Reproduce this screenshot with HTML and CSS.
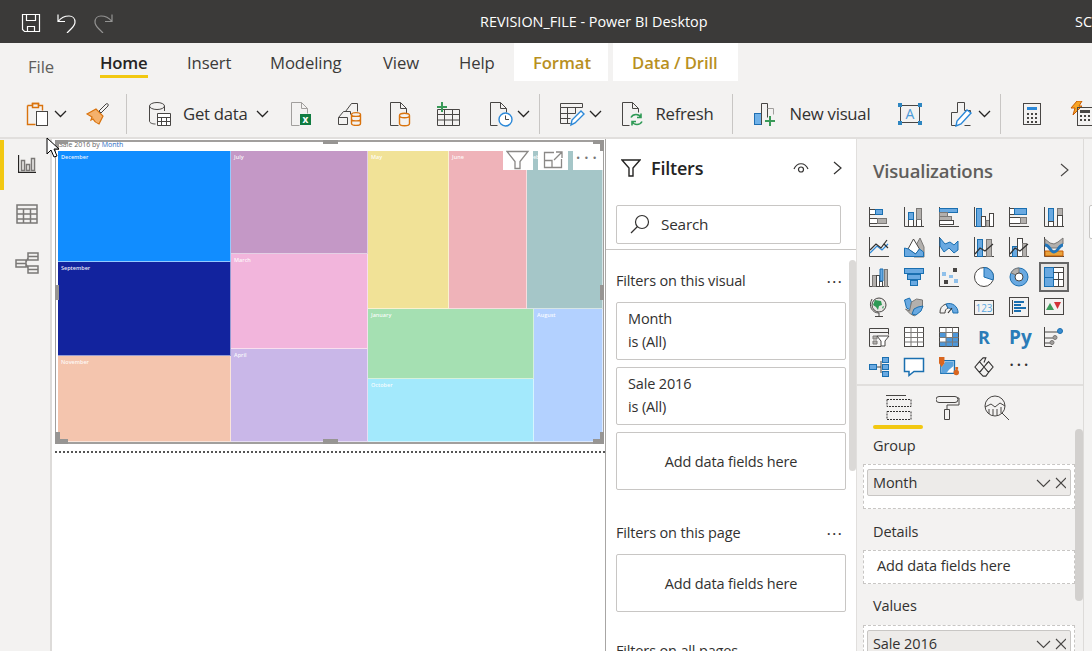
FILE: index.html
```html
<!DOCTYPE html>
<html lang="en">
<head>
    <meta charset="UTF-8">
    <title>REVISION_FILE - Power BI Desktop</title>
    <link rel="stylesheet" href="styles.css">
</head>
<body>
<div class="app">
    <header class="titlebar">
        <div class="quick">
            <svg width="20" height="20" viewBox="0 0 20 20"><path class="wl" d="M1.500 1.500h17v17h-15l-2-2zM5.500 1.500v6h9v-6M6.500 18.500v-5h7v5"/></svg>
            <svg width="20" height="20" viewBox="0 0 20 20"><path class="wl" d="M1 1.500v7h7M1.500 8C5 3.500 9 3 12 3c4 0 6 3 6 6 0 3-2 5-4 7l-4 4"/></svg>
            <svg class="off" width="20" height="20" viewBox="0 0 20 20"><path class="wl" d="M19 1.500v7h-7M18.500 8C15 3.500 11 3 8 3c-4 0-6 3-6 6 0 3 2 5 4 7l4 4"/></svg>
        </div>
        <div class="doc-title">REVISION_FILE - Power BI Desktop</div>
        <div class="user">SC</div>
    </header>

    <nav class="tabs">
        <a class="tab file">File</a>
        <a class="tab home">Home</a>
        <a class="tab insert">Insert</a>
        <a class="tab modeling">Modeling</a>
        <a class="tab view">View</a>
        <a class="tab help">Help</a>
        <a class="ctx format">Format</a>
        <a class="ctx drill">Data / Drill</a>
    </nav>

    <div class="ribbon">
        <svg class="m26" width="24" height="26" viewBox="0 0 24 26"><path class="or" d="M1.500 4.500h5v-2h6v2h4v5"/><path class="or" d="M1.500 4.500v19h8"/><path class="or" d="M6.500 2.500h6v4h-6z"/><rect class="dk" x="10.500" y="10.500" width="11" height="14"/></svg>
        <svg class="chev m4" width="13" height="8" viewBox="0 0 13 8"><path d="M1 1l5.500 5.500L12 1"/></svg>
        <svg class="m19" width="24" height="24" viewBox="0 0 24 24"><path class="or2" d="M1 12l9-5 7 7-4 8c-3-1-5-3-6-5l-2 1 1-3z"/><path class="dk0" d="M13 9l7-7c1-1 3 0 2 2l-7 7z"/></svg>
        <span class="sep m16"></span>
        <svg class="m21" width="24" height="26" viewBox="0 0 24 26"><path class="dk0" d="M1.500 5v15c0 2 3 3 6 3M16.500 5v5"/><ellipse class="dk0" cx="9" cy="5" rx="7.500" ry="3.500"/><path class="dk" d="M9.500 12.500h13v12h-13zM9.500 16.500h13M13.500 16.500v8M18.500 16.500v8M9.500 20.500h13"/></svg>
        <span class="rb-text m11">Get data</span>
        <svg class="chev m8" width="13" height="8" viewBox="0 0 13 8"><path d="M1 1l5.500 5.500L12 1"/></svg>
        <svg class="m21" width="22" height="26" viewBox="0 0 22 26"><path class="lt" d="M1.500 24.500v-23h10l6 6v5M11.500 1.500v6h6M1.500 24.500h8"/><rect class="xl" x="10" y="13" width="11" height="11"/><text class="xl-x" x="12.500" y="22">x</text></svg>
        <svg class="m25" width="25" height="26" viewBox="0 0 25 26"><path class="dk0" d="M8.500 10.500l6-8h6v8M1.500 16.500l5-6h7v3M1.500 16.500v7h9M1.500 16.500h9v7"/><path class="or" d="M14.500 13.500c0-2.500 9-2.500 9 0v9c0 2.500-9 2.500-9 0zM14.500 13.500c0 2.500 9 2.500 9 0M14.500 18c0 2.500 9 2.500 9 0"/></svg>
        <svg class="m27" width="24" height="26" viewBox="0 0 24 26"><path class="dk0" d="M1.500 24.500v-23h10l6 6v5M11.500 1.500v6h6M1.500 24.500h8"/><path class="or" d="M10.500 14.500c0-3 10-3 10 0v8c0 3-10 3-10 0zM10.500 14.500c0 3 10 3 10 0"/></svg>
        <svg class="m23" width="24" height="24" viewBox="0 0 24 24"><path class="dk0" d="M1.500 7.500h22v16h-22zM1.500 12.500h22M1.500 18h22M8.500 7.500v16M16.500 7.500v16"/><path class="gn" d="M6 0v10M1 5h10"/></svg>
        <svg class="m29" width="24" height="26" viewBox="0 0 24 26"><path class="dk0" d="M1.500 24.500v-23h10l6 6v4M11.500 1.500v6h6M1.500 24.500h7"/><circle class="bc" cx="16.500" cy="18.500" r="6.500"/><path class="bc0" d="M16.500 14.500v4h3.500"/></svg>
        <svg class="chev m4" width="13" height="8" viewBox="0 0 13 8"><path d="M1 1l5.500 5.500L12 1"/></svg>
        <span class="sep m9"></span>
        <svg class="m19" width="26" height="26" viewBox="0 0 26 26"><path class="dk0" d="M1.500 2.500h22v4h-22zM1.500 6.500v16h10M8.500 6.500v16M16.500 6.500v6M1.500 12.500h15M1.500 17.500h10"/><path class="bc" d="M12 24l1-5 9-9 3 3-9 9z"/></svg>
        <svg class="chev m4" width="13" height="8" viewBox="0 0 13 8"><path d="M1 1l5.500 5.500L12 1"/></svg>
        <svg class="m19" width="24" height="26" viewBox="0 0 24 26"><path class="dk0" d="M1.500 24.500v-23h10l6 6v4M11.500 1.500v6h6M1.500 24.500h7"/><path class="gn2" d="M10 16.500c2-4 8-4 10 0M20 12.500v4h-4M21 20.500c-2 4-8 4-10 0M11 24.500v-4h4"/></svg>
        <span class="rb-text m11">Refresh</span>
        <span class="sep m19"></span>
        <svg class="m20" width="24" height="24" viewBox="0 0 24 24"><rect class="bx" x="1.500" y="11.500" width="7" height="11"/><path class="dk0" d="M8.500 22.500v-21h6v14"/><path class="lt" d="M14.500 6.500h6v6"/><path class="gn" d="M17 14v10M12 19h10"/></svg>
        <span class="rb-text m12">New visual</span>
        <svg class="m28" width="24" height="24" viewBox="0 0 24 24"><rect class="dk0" x="2.500" y="3.500" width="19" height="17"/><text class="tb-a" x="12" y="17" text-anchor="middle">A</text><path class="hd" d="M0 1h4v4H0zM20 1h4v4h-4zM0 19h4v4H0zM20 19h4v4h-4z"/></svg>
        <svg class="m28" width="24" height="26" viewBox="0 0 24 26"><path class="dk0" d="M1.500 24.500v-13h6v-10h7v8h6v3M1.500 24.500h6M14.500 24.500h6"/><path class="bc" d="M6 25l1-5 10-11 4 3-10 11z"/></svg>
        <svg class="chev m4" width="13" height="8" viewBox="0 0 13 8"><path d="M1 1l5.500 5.500L12 1"/></svg>
        <span class="sep m9"></span>
        <svg class="m21" width="20" height="24" viewBox="0 0 20 24"><rect class="dk0" x="1.500" y="1.500" width="17" height="21"/><path class="bc1" d="M5 5h10v3H5z"/><path class="dots" d="M5 11h2v2H5zM9 11h2v2H9zM13 11h2v2h-2zM5 15h2v2H5zM9 15h2v2H9zM13 15h2v2h-2zM5 19h2v2H5zM9 19h2v2H9zM13 19h2v2h-2z"/></svg>
        <svg class="m27" width="24" height="26" viewBox="0 0 24 26"><path class="bolt" d="M8 0h5l-3 5h3l-9 9 2-7H2z"/><rect class="dk0" x="8.500" y="6.500" width="15" height="18"/><path class="dots" d="M11 9h10v3H11zM11 14h2v2h-2zM15 14h2v2h-2zM19 14h2v2h-2zM11 18h2v2h-2zM15 18h2v2h-2zM19 18h2v2h-2z"/></svg>
    </div>

    <div class="workspace">
        <aside class="rail">
            <div class="rail-item active">
                <svg width="18" height="18" viewBox="0 0 18 18"><path class="rl" d="M.5 0v17.500H18"/><path class="rl2" d="M3.500 5.500h3v10h-3zM8.500 9.500h3v6h-3zM13.500 3.500h3v12h-3z"/></svg>
            </div>
            <div class="rail-item">
                <svg width="22" height="20" viewBox="0 0 22 20"><path class="rl2" d="M1 1h20v18H1zM1 5h20M1 10h20M1 15h20M7.500 5v14M14.500 5v14"/></svg>
            </div>
            <div class="rail-item">
                <svg width="24" height="22" viewBox="0 0 24 22"><path class="rl2" d="M13 1h10v7H13zM13 4.500h10M1 8h10v7H1zM1 11.500h10M13 14h10v7H13zM13 17.500h10M11 10l2-4M11 12l2 4"/></svg>
            </div>
        </aside>

        <main class="canvas">
            <div class="visual">
                <div class="visual-title">Sale 2016 by <b>Month</b></div>
                <div class="treemap">
                    <div class="col col-a">
                        <div class="leaf december">December</div>
                        <div class="leaf september">September</div>
                        <div class="leaf november">November</div>
                    </div>
                    <div class="col col-b">
                        <div class="leaf july">July</div>
                        <div class="leaf march">March</div>
                        <div class="leaf april">April</div>
                    </div>
                    <div class="col col-c">
                        <div class="row row-top">
                            <div class="leaf may">May</div>
                            <div class="leaf june">June</div>
                            <div class="leaf feb">February</div>
                        </div>
                        <div class="row row-bottom">
                            <div class="col col-d">
                                <div class="leaf january">January</div>
                                <div class="leaf october">October</div>
                            </div>
                            <div class="leaf august">August</div>
                        </div>
                    </div>
                </div>
                <div class="hover-bar">
                    <span class="hover-btn"><svg width="24" height="20" viewBox="0 0 24 20"><path class="hv" d="M1 1.500h21l-8 10v7h-5v-7z"/></svg></span>
                    <span class="hover-btn"><svg width="20" height="18" viewBox="0 0 20 18"><path class="hv" d="M11 1.500H1.500v15h17V8M1.500 9.500H9v7M13 1h6v6M19 1l-8 8"/></svg></span>
                    <span class="hover-btn more">&middot;&middot;&middot;</span>
                </div>
                <i class="h tl"></i><i class="h tl2"></i><i class="h tm"></i><i class="h tr"></i><i class="h tr2"></i>
                <i class="h ml"></i><i class="h mr"></i>
                <i class="h hbl"></i><i class="h hbl2"></i><i class="h hbm"></i><i class="h hbr"></i><i class="h hbr2"></i>
            </div>
            <div class="dotted"></div>
        </main>

        <section class="filters">
            <div class="filters-head">
                <svg width="20" height="18" viewBox="0 0 20 18"><path class="fl" d="M1 1h18l-7 8v8H8V9z"/></svg>
                <h2>Filters</h2>
                <svg class="eye" width="16" height="12" viewBox="0 0 16 12"><path class="fl0" d="M1 7c3-7 11-7 14 0"/><circle class="fl0" cx="8" cy="7.500" r="2.500"/></svg>
                <svg class="next" width="9" height="14" viewBox="0 0 9 14"><path class="fl0" d="M1 1l7 6-7 6"/></svg>
            </div>
            <div class="search">
                <svg width="20" height="20" viewBox="0 0 20 20"><circle class="fl0" cx="12" cy="8" r="6.500"/><path class="fl0" d="M7.500 12.500L1 19"/></svg>
                <span>Search</span>
            </div>
            <div class="filter-scroll">
                <div class="filter-heading"><span>Filters on this visual</span><span class="ell">&middot;&middot;&middot;</span></div>
                <div class="card"><div>Month</div><div>is (All)</div></div>
                <div class="card"><div>Sale 2016</div><div>is (All)</div></div>
                <div class="card empty">Add data fields here</div>
                <div class="filter-heading page"><span>Filters on this page</span><span class="ell">&middot;&middot;&middot;</span></div>
                <div class="card empty">Add data fields here</div>
                <div class="filter-heading all"><span>Filters on all pages</span></div>
                <div class="thumb"></div>
            </div>
        </section>

        <section class="viz">
            <div class="viz-head">
                <h2>Visualizations</h2>
                <svg width="9" height="14" viewBox="0 0 9 14"><path class="gy" d="M1 1l7 6-7 6"/></svg>
            </div>
            <div class="viz-grid">
                <svg viewBox="0 0 20 20"><path class="ax" d="M.5 0v19.500H20"/><rect class="wh" x=".5" y="2.500" width="6" height="5"/><rect class="blu" x="6.500" y="2.500" width="7" height="5"/><rect class="wh" x=".5" y="11.500" width="8" height="5"/><rect class="gr" x="8.500" y="11.500" width="9" height="5"/></svg>
                <svg viewBox="0 0 20 20"><path class="ax" d="M.5 0v19.500H20"/><rect class="wh" x="4.500" y="12.500" width="5" height="7"/><rect class="blu" x="4.500" y="5.500" width="5" height="7"/><rect class="wh" x="12.500" y="12.500" width="5" height="7"/><rect class="gr" x="12.500" y="1.500" width="5" height="11"/></svg>
                <svg viewBox="0 0 20 20"><path class="ax" d="M.5 0v19.500H20"/><rect class="blu" x=".5" y="1.500" width="18" height="4"/><rect class="gr" x=".5" y="5.500" width="8" height="4"/><rect class="gr" x=".5" y="9.500" width="12" height="4"/><rect class="wh" x=".5" y="13.500" width="14" height="4"/></svg>
                <svg viewBox="0 0 20 20"><path class="ax" d="M.5 0v19.500H20"/><rect class="blu" x="2.500" y="1.500" width="5" height="18"/><rect class="wh" x="7.500" y="9.500" width="4" height="10"/><rect class="gr" x="12" y="13.500" width="3.500" height="6"/><rect class="wh" x="15.500" y="6.500" width="4" height="13"/></svg>
                <svg viewBox="0 0 20 20"><path class="ax" d="M.5 0v19.500H20"/><rect class="wh" x=".5" y="1.500" width="5" height="6"/><rect class="blu" x="5.500" y="1.500" width="12" height="6"/><rect class="wh" x=".5" y="10.500" width="11" height="6"/><rect class="gr" x="11.500" y="10.500" width="6" height="6"/></svg>
                <svg viewBox="0 0 20 20"><path class="ax" d="M.5 0v19.500H20"/><rect class="blu" x="4.500" y="1.500" width="5" height="13"/><rect class="wh" x="4.500" y="14.500" width="5" height="5"/><rect class="gr" x="13.500" y="1.500" width="5" height="7"/><rect class="wh" x="13.500" y="8.500" width="5" height="11"/></svg>

                <svg viewBox="0 0 20 20"><path class="ax" d="M.5 0v19.500H20"/><path class="ln-b" d="M1 16l7-7 5 4 6-6"/><path class="ln-d" d="M1 13l6-6 5 4 3-4 4 4M15 7l3-4"/></svg>
                <svg viewBox="0 0 20 20"><path class="gr" d="M10 20V12l6-11 4 9v10z"/><path class="wh" d="M4 12L9.500 2l6 10-4 5z"/><path class="blu" d="M.5 19.500V11l4 1 7 5 4-5 4 3v4.500z"/></svg>
                <svg viewBox="0 0 20 20"><path class="ax" d="M.5 0v19.500H20"/><path class="blu" d="M1 1l5 6 5-2 4 3 4-4v9l-4 3-5-5-5 4-4-6z"/></svg>
                <svg viewBox="0 0 20 20"><path class="ax" d="M.5 0v19.500H20"/><rect class="blu" x="3.500" y="2.500" width="5" height="17"/><rect class="gr" x="12.500" y="2.500" width="5" height="17"/><path class="ln-d" d="M1 17l5-6 5 3 8-7"/></svg>
                <svg viewBox="0 0 20 20"><path class="ax" d="M.5 0v19.500H20"/><rect class="blu" x="3.500" y="9.500" width="5" height="10"/><rect class="wh" x="8.500" y="1.500" width="5" height="18"/><rect class="gr" x="13.500" y="6.500" width="4" height="13"/><path class="ln-d" d="M1 17l5-6 5 3 8-7"/></svg>
                <svg viewBox="0 0 20 20"><path class="ax" d="M.5 0v19.500H20"/><path class="gr" d="M1 2l5 4 4 1 4-2 5-4v6l-6 4h-6L1 8z"/><path class="or-f" d="M1 14h18v5H1z"/><path class="rib" d="M1 8c5 0 5 7 9 7s5-7 9-7"/></svg>

                <svg viewBox="0 0 20 20"><path class="ax" d="M.5 0v19.500H20"/><rect class="gr" x="3.500" y="8.500" width="4" height="11"/><rect class="wh" x="7.500" y="8.500" width="3" height="11"/><rect class="wh" x="10.500" y="14.500" width="3" height="5"/><path class="blu" d="M11 14V2h3v12z"/><rect class="gr" x="15.500" y="2.500" width="3" height="17"/></svg>
                <svg viewBox="0 0 20 20"><rect class="blu" x=".5" y="1.500" width="19" height="5"/><rect class="blu" x="3.500" y="7.500" width="13" height="5"/><rect class="blu" x="6.500" y="13.500" width="7" height="5"/></svg>
                <svg viewBox="0 0 20 20"><path class="ax" d="M.5 0v19.500H20"/><path class="dots" d="M14 1h4v4h-4zM5 13h4v4H5z"/><path class="sc" d="M3 5h4v4H3zM10 8h4v3h-4zM15 12h4v4h-4z"/></svg>
                <svg viewBox="0 0 20 20"><circle class="wh" cx="10" cy="10" r="9.500"/><path class="blu" d="M10 .5a9.500 9.500 0 0 1 9 12.500L10 10z"/></svg>
                <svg viewBox="0 0 20 20"><circle class="blu" cx="10" cy="10" r="9"/><path class="gr" d="M10 1a9 9 0 0 0-8 5l5 2a4 4 0 0 1 3-2z"/><circle class="wh" cx="10" cy="10" r="4"/></svg>
                <span class="viz-sel"><svg viewBox="0 0 20 20"><rect class="wh" x=".5" y=".5" width="19" height="19"/><rect class="blu" x=".5" y=".5" width="9" height="10"/><rect class="blu" x=".5" y="10.500" width="9" height="9"/><path class="ax" d="M9.500 5.500h10M14.500 5.500v14M9.500 12.500h10"/></svg></span>

                <svg viewBox="0 0 20 20"><circle class="gb" cx="10" cy="8" r="7"/><path class="gm" d="M6 3l6 1 1 4-3 1-1 4-2-3-3-2zM13 10l2-1-1 3z"/><path class="ax" d="M3 2c-4 7 0 14 7 14M10 16v3M6 19.500h8"/></svg>
                <svg viewBox="0 0 20 20"><path class="blu" d="M.5 3l5-2 2 4-1 8-4-2z"/><path class="gr" d="M7.500 5l5-3 6 1v7l-5 6-3 3-4-2-5-5 4 2z"/><path class="blu" d="M10 12l4-2 5-1-2 5-5 4-4-1z"/></svg>
                <svg viewBox="0 0 20 20"><path class="ax" d="M1 16a9 9 0 0 1 6-9l2 4c-2 1-3 2-3 5z"/><path class="blu" d="M7 7a9 9 0 0 1 12 9h-5c0-3-2-5-5-5z"/><path class="ln-d" d="M9 16l4-5"/></svg>
                <svg viewBox="0 0 20 20"><rect class="dk0" x=".5" y="3.500" width="19" height="14"/><text class="num" x="10" y="14.500" text-anchor="middle">123</text></svg>
                <svg viewBox="0 0 20 20"><rect class="dk0" x=".5" y=".5" width="19" height="19"/><path class="ax" d="M3.500 3v14"/><path class="mr1" d="M5 5h10M5 8h7M5 11h12M5 14h7"/></svg>
                <svg viewBox="0 0 20 20"><rect class="dk0" x=".5" y="1.500" width="19" height="16"/><path class="gt" d="M6 6l4 7H2z"/><path class="rt" d="M10 5h7l-3.500 7z"/></svg>

                <svg viewBox="0 0 20 20"><path class="ax" d="M12 19.500H.5V1.500h19v6"/><path class="ax" d="M.5 5.500h19"/><path class="gr" d="M4 9h4v3H4zM4 14h4v3H4z"/><path class="wh" d="M8 9h12l-4 5v5h-4v-5z"/></svg>
                <svg viewBox="0 0 20 20"><rect class="wh" x=".5" y=".5" width="19" height="19"/><path class="tbl" d="M.5 5.500h19M.5 10.500h19M.5 15h19M7 .5v19M13.500 .5v19"/></svg>
                <svg viewBox="0 0 20 20"><rect class="wh" x=".5" y=".5" width="19" height="19"/><path class="blf" d="M1 6h6v5H1zM7 11h6v8H7zM13 6h6v13h-6zM1 15h6v4H1z"/><path class="tbl" d="M.5 5.500h19M.5 10.500h19M.5 15h19M7 .5v19M13.500 .5v19"/></svg>
                <span class="viz-word r">R</span>
                <span class="viz-word py">Py</span>
                <svg viewBox="0 0 20 20"><path class="ax" d="M.5 0v19.500H8"/><path class="ax" d="M1 5h13M1 11h8M1 16h5"/><circle class="bd" cx="16" cy="4" r="2.500"/><circle class="gd" cx="11" cy="10.500" r="2"/><circle class="gd" cx="8" cy="15.500" r="2"/></svg>

                <svg viewBox="0 0 20 20"><path class="ax" d="M8 10h4M12 4v12"/><rect class="blu" x=".5" y="7.500" width="7" height="5"/><rect class="blu" x="13.500" y=".5" width="6" height="5"/><rect class="blu" x="13.500" y="7.500" width="6" height="5"/><rect class="blu" x="13.500" y="14.500" width="6" height="5"/></svg>
                <svg viewBox="0 0 20 20"><path class="qa" d="M.5 1.500h19v13H10l-5 4v-4H.5z"/></svg>
                <svg viewBox="0 0 22 22"><path class="arc" d="M2 4h15v14H2z"/><path class="arcb" d="M7 5l9 0v5l-5 4-3 4H3v-7z"/><path class="pin" d="M0 0h6v7l-3 4-3-4zM16 17a3 3 0 1 1 6 0 3 3 0 0 1-6 0zM18 11h3v3h-3z"/></svg>
                <svg viewBox="0 0 22 22"><path class="dia" d="M1 11L6 5 11 11 6 17zM6 5l4-4h3l-2 5M11 11l5-6 5 6-5 6zM6 17l4 4h3l3-4M11 11l-4 5M11 11l4-5"/></svg>
                <span class="viz-more">&middot;&middot;&middot;</span>
            </div>
            <div class="viz-tabs">
                <svg class="tab-fields" width="26" height="26" viewBox="0 0 26 26"><path class="ax" d="M0 .5h20"/><path class="dash" d="M1 4.500h24v7H1zM1 16.500h24v8H1z"/></svg>
                <svg width="24" height="26" viewBox="0 0 24 26"><path class="ax" d="M3 1.500h16a2 2 0 0 1 0 6H3a2 2 0 0 1 0-6zM21 3h2v7H11v4M8.500 14.500h5v10h-5z"/></svg>
                <svg width="26" height="26" viewBox="0 0 26 26"><circle class="ax" cx="11" cy="11" r="10"/><path class="ax" d="M1 12l6-3 4 3 5-4 5 3M5 14v5M9 14v6M13 14v6M17 12v6M18 18l7 7"/></svg>
            </div>
            <i class="tab-mark"></i>
            <div class="wells">
                <div class="well-label">Group</div>
                <div class="well group"><div class="pill"><span>Month</span><svg width="30" height="12" viewBox="0 0 30 12"><path class="gy" d="M1 3l6.500 6.500L14 3M20 1l10 10M30 1L20 11"/></svg></div></div>
                <div class="well-label details">Details</div>
                <div class="well single">Add data fields here</div>
                <div class="well-label values">Values</div>
                <div class="well last"><div class="pill"><span>Sale 2016</span><svg width="30" height="12" viewBox="0 0 30 12"><path class="gy" d="M1 3l6.500 6.500L14 3M20 1l10 10M30 1L20 11"/></svg></div></div>
            </div>
            <div class="viz-scroll"></div>
        </section>

        <aside class="fields-edge"><div class="edge-box"></div></aside>
    </div>

    <svg class="cursor" width="14" height="22" viewBox="0 0 14 22"><path d="M1 1v16l4-4 3 7 3-1-3-7h5z"/></svg>
</div>
</body>
</html>
```

FILE: styles.css
```css
* { box-sizing: border-box; }
html, body { margin: 0; height: 100%; overflow: hidden; }
body { font-family: "Open Sans", "Noto Sans", Arial, sans-serif; color: #252423; background: #f3f2f1; }
.app { position: relative; width: 1092px; height: 651px; overflow: hidden; display: flex; flex-direction: column; }
h2 { margin: 0; }

/* title bar */
.titlebar { height: 43px; flex: none; background: #3b3a39; color: #fff; display: flex; align-items: center; position: relative; }
.quick { display: flex; gap: 16px; padding-left: 21px; padding-top: 2px; }
.quick .off { opacity: .45; }
.wl { fill: none; stroke: #fff; stroke-width: 1.200; }
.doc-title { position: absolute; left: 480px; top: 12px; font-size: 14.400px; white-space: nowrap; }
.user { position: absolute; left: 1075px; top: 12px; font-size: 14.400px; }

/* tabs */
.tabs { height: 38px; flex: none; display: flex; font-size: 16.700px; color: #3b3a39; }
.tab { padding-top: 8px; height: 38px; letter-spacing: -.1px; }
.file { margin-left: 28px; padding-top: 12px; color: #605e5c; width: 72px; }
.home { width: 87px; font-weight: 600; color: #252423; position: relative; letter-spacing: -.2px; }
.home::after { content: ""; position: absolute; left: 0; top: 32px; width: 48px; height: 3px; background: #f2c811; }
.insert { width: 83px; }
.modeling { width: 113px; }
.view { width: 76px; }
.help { width: 55px; }
.ctx { background: #fff; color: #b8901f; font-weight: 600; padding: 8px 0 0 19px; letter-spacing: -.1px; }
.format { width: 94px; }
.drill { width: 125px; margin-left: 5px; }

/* ribbon */
.ribbon { height: 58px; flex: none; display: flex; align-items: center; border-bottom: 2px solid #e1dfdd; padding-top: 9px; white-space: nowrap; }
.ribbon svg { flex: none; }
.rb-text { font-size: 16.700px; color: #323130; letter-spacing: -.25px; }
.sep { width: 1px; height: 40px; background: #c8c6c4; flex: none; }
.m4 { margin-left: 4px; } .m8 { margin-left: 8px; } .m9 { margin-left: 9px; } .m11 { margin-left: 11px; }
.m12 { margin-left: 12px; } .m16 { margin-left: 16px; } .m19 { margin-left: 19px; } .m20 { margin-left: 20px; }
.m21 { margin-left: 21px; } .m23 { margin-left: 23px; } .m25 { margin-left: 25px; } .m26 { margin-left: 26px; }
.m27 { margin-left: 27px; } .m28 { margin-left: 28px; } .m29 { margin-left: 29px; }
.chev path { fill: none; stroke: #252423; stroke-width: 1.300; }
.or { fill: none; stroke: #d9730d; stroke-width: 1.400; }
.or2 { fill: #f4b16c; stroke: #d9730d; stroke-width: 1.200; }
.dk { fill: #fff; stroke: #484644; }
.dk0 { fill: none; stroke: #484644; }
.lt { fill: none; stroke: #a19f9d; }
.xl { fill: #107c41; }
.xl-x { fill: #fff; font-size: 10px; font-weight: 700; }
.gn { fill: none; stroke: #399a58; stroke-width: 2; }
.gn2 { fill: none; stroke: #2f9a56; stroke-width: 1.600; }
.bc { fill: #fff; stroke: #2b88d8; stroke-width: 1.400; }
.bc0 { fill: none; stroke: #484644; }
.bc1 { fill: #2b88d8; }
.bx { fill: #6fb1e8; stroke: #1f6fb2; }
.hd { fill: #2e86c1; }
.tb-a { fill: #4a9ad8; font-size: 14px; }
.dots { fill: #484644; }
.bolt { fill: #f7a525; stroke: #c85a00; }

/* workspace */
.workspace { flex: 1; display: flex; min-height: 0; }
.rail { width: 52px; flex: none; border-right: 2px solid #dddbd9; padding-top: 1px; }
.rail-item { height: 49px; display: flex; align-items: center; justify-content: center; padding: 0 0 2px 3px; }
.rail-item.active { height: 50px; border-left: 4px solid #f2c811; padding: 0 1px 2px 1px; }
.rl { fill: none; stroke: #252423; stroke-width: 1.300; }
.rl2 { fill: none; stroke: #7a7876; stroke-width: 1.500; }

/* canvas */
.canvas { width: 554px; flex: none; background: #fff; border-right: 1px solid #a8a6a4; padding: 1px 0 0 3px; }
.visual { position: relative; width: 549px; height: 304px; border: 1px solid #a19f9d; border-width: 2px 1px; padding: 0 2px; }
.visual-title { height: 9px; font-size: 7px; line-height: 6px; padding-left: 1px; color: #666; white-space: nowrap; }
.visual-title b { font-weight: 400; color: #2b6cc4; }
.treemap { display: flex; width: 545px; height: 291px; font-size: 5.500px; font-weight: 600; color: rgba(255,255,255,.92); }
.col { display: flex; flex-direction: column; }
.row { display: flex; }
.col-a { width: 173px; }
.col-b { width: 137px; }
.col-c { width: 235px; }
.col-d { width: 166px; }
.row-top { height: 158px; }
.row-bottom { height: 133px; }
.leaf { padding: 2px 3px; border-right: 1px solid rgba(255,255,255,.55); border-bottom: 1px solid rgba(255,255,255,.55); overflow: hidden; }
.december { height: 111px; background: #118dff; }
.september { height: 94px; background: #12239e; }
.november { height: 86px; background: #f4c5ae; }
.july { height: 103px; background: #c498c6; }
.march { height: 95px; background: #f2b5dc; }
.april { height: 93px; background: #c9b7e8; }
.may { width: 81px; background: #f1e297; }
.june { width: 78px; background: #efb3b9; }
.feb { width: 76px; background: #a5c6c8; }
.january { height: 70px; background: #a5e0b2; }
.october { height: 63px; background: #a3e9fc; }
.august { width: 69px; background: #b3d1ff; }

.hover-bar { position: absolute; right: 0; top: 7px; display: flex; gap: 5px; }
.hover-btn { width: 30px; height: 21px; background: #fff; display: flex; align-items: center; justify-content: center; }
.hover-btn.more { font-size: 20px; letter-spacing: 3px; color: #777; line-height: 1; padding-bottom: 4px; }
.hv { fill: none; stroke: #8a8886; stroke-width: 1.300; }
.h { position: absolute; background: #979593; }
.tl { left: -1px; top: -2px; width: 13px; height: 4px; }
.tl2 { left: -1px; top: -2px; width: 4px; height: 10px; }
.tm { left: 267px; top: -2px; width: 15px; height: 4px; }
.tr { right: -1px; top: -2px; width: 11px; height: 4px; }
.tr2 { right: -1px; top: -2px; width: 4px; height: 11px; }
.ml { left: -1px; top: 143px; width: 4px; height: 15px; }
.mr { right: -1px; top: 143px; width: 4px; height: 15px; }
.hbl, .hbl2, .hbm, .hbr, .hbr2 { bottom: -2px; }
.hbl { left: -1px; width: 13px; height: 5px; }
.hbl2 { left: -1px; width: 5px; height: 12px; }
.hbm { left: 267px; width: 15px; height: 5px; }
.hbr { right: -1px; width: 11px; height: 5px; }
.hbr2 { right: -1px; width: 4px; height: 12px; }
.dotted { width: 550px; margin-top: 7px; border-top: 2px dotted #555; }

/* filters */
.filters { width: 251px; flex: none; background: #fff; position: relative; border-right: 1px solid #e1dfdd; }
.filters-head { height: 66px; display: flex; align-items: center; padding: 0 14px 9px 15px; position: relative; }
.filters-head h2 { font-size: 18px; font-weight: 600; margin-left: 10px; letter-spacing: -.2px; }
.eye { margin-left: auto; margin-right: 24px; }
.fl { fill: none; stroke: #252423; stroke-width: 1.400; }
.fl0 { fill: none; stroke: #323130; stroke-width: 1.200; }
.search { margin: 0 15px 0 10px; height: 39px; border: 1px solid #c8c6c4; border-radius: 2px; display: flex; align-items: center; gap: 11px; padding: 0 0 2px 13px; font-size: 15.300px; color: #323130; letter-spacing: -.2px; }
.filter-scroll { margin-top: 5px; border-top: 1px solid #c8c6c4; padding: 20px 10px 0; position: relative; }
.filter-heading { display: flex; justify-content: space-between; font-size: 14.500px; height: 21px; line-height: 21px; color: #323130; letter-spacing: -.15px; padding-right: 3px; }
.filter-heading.page { margin-top: 32px; }
.filter-heading.all { margin-top: 28px; }
.ell { font-size: 17px; letter-spacing: 1px; line-height: 24px; }
.card { width: 230px; height: 58px; margin-top: 7px; border: 1px solid #c8c6c4; border-radius: 2px; padding: 4px 11px; font-size: 14.500px; line-height: 23px; color: #323130; letter-spacing: -.15px; }
.filter-heading + .card { margin-top: 11px; }
.card.empty { display: flex; align-items: center; justify-content: center; }
.thumb { position: absolute; left: 243px; top: 10px; width: 7px; height: 211px; background: #dbd9d7; border-radius: 4px; }

/* visualizations */
.viz { width: 227px; flex: none; position: relative; border-right: 1px solid #dddbd9; }
.viz-head { height: 59px; display: flex; align-items: center; padding: 3px 14px 0 16px; justify-content: space-between; color: #605e5c; }
.viz-head h2 { font-size: 18.500px; font-weight: 600; letter-spacing: -.2px; }
.gy { fill: none; stroke: #484644; stroke-width: 1.100; }
.viz-grid { display: grid; grid-template-columns: repeat(6, 20px); grid-auto-rows: 20px; gap: 10px 15px; padding: 9px 0 0 12px; height: 186px; }
.viz-grid svg { width: 20px; height: 20px; overflow: visible; display: block; }
.viz-sel { margin: -5px; width: 30px; height: 30px; border: 2px solid #666; padding: 3px; display: block; background: #e8e6e4; }
.viz-word { font-weight: 700; color: #2b7cb8; line-height: 20px; text-align: center; }
.viz-word.r { font-size: 18px; }
.viz-word.py { font-size: 19px; }
.viz-more { font-size: 20px; letter-spacing: 2px; line-height: 16px; color: #323130; text-align: center; white-space: nowrap; }
.ax { fill: none; stroke: #484644; stroke-width: 1; }
.wh { fill: #fff; stroke: #484644; }
.blu { fill: #69a9e1; stroke: #1a6fb0; }
.gr { fill: #b3b0ad; stroke: #7a7876; }
.ln-b { fill: none; stroke: #2b88d8; stroke-width: 1.200; }
.ln-d { fill: none; stroke: #323130; stroke-width: 1.200; }
.or-f { fill: #e8a33d; stroke: #c85a00; }
.rib { fill: none; stroke: #2276bb; stroke-width: 3; }
.sc { fill: #8fc0ea; }
.gb { fill: #e8e6e4; stroke: #484644; }
.gm { fill: #2f9a56; }
.num { fill: #5ba8e0; font-size: 10px; }
.mr1 { fill: none; stroke: #1a6fb0; stroke-width: 2; }
.gt { fill: #3c9c5a; }
.rt { fill: #d13438; }
.tbl { fill: none; stroke: #7a7876; }
.blf { fill: #4d97d9; }
.bd { fill: #3a8cd0; stroke: #1a6fb0; }
.gd { fill: #a19f9d; stroke: #7a7876; }
.qa { fill: #fff; stroke: #1a6fb0; stroke-width: 1.500; }
.arc { fill: #fff; stroke: #1a6fb0; stroke-width: 1.500; }
.arcb { fill: #5ca3dd; }
.pin { fill: #d9661f; }
.dia { fill: none; stroke: #323130; stroke-width: 1.200; }

.viz-tabs { border-top: 2px solid #e1dfdd; height: 41px; display: flex; padding: 9px 0 0 29px; gap: 24px; margin-top: 0; }
.dash { fill: none; stroke: #323130; stroke-dasharray: 2 1; }
.tab-mark { display: block; width: 50px; height: 4px; border-radius: 2px; background: #f2c811; margin-left: 16px; }
.wells { padding: 8px 0 0 6px; font-size: 14.500px; color: #323130; letter-spacing: -.1px; }
.well-label { height: 21px; line-height: 17px; padding-left: 10px; }
.well-label.details { margin-top: 14px; }
.well-label.values { margin-top: 13px; }
.well { width: 212px; margin-top: 6px; background: #fff; border: 1px dashed #c8c6c4; padding: 4px 3px; }
.well.last { margin-top: 7px; }
.well.group { height: 45px; }
.well.single { height: 34px; padding: 0 13px; line-height: 29px; }
.pill { height: 27px; border: 1px solid #c8c6c4; border-radius: 2px; background: #edebe9; display: flex; align-items: center; justify-content: space-between; padding: 0 4px 0 5px; }
.viz-scroll { position: absolute; left: 218px; top: 290px; width: 8px; height: 172px; background: #d2d0ce; border-radius: 4px; }

.fields-edge { flex: 1; position: relative; }
.edge-box { position: absolute; left: 5px; top: 66px; width: 10px; height: 34px; border: 1px solid #c8c6c4; border-radius: 2px; background: #fff; }

.cursor { position: absolute; left: 46px; top: 137px; }
.cursor path { fill: #fff; stroke: #000; }
```
